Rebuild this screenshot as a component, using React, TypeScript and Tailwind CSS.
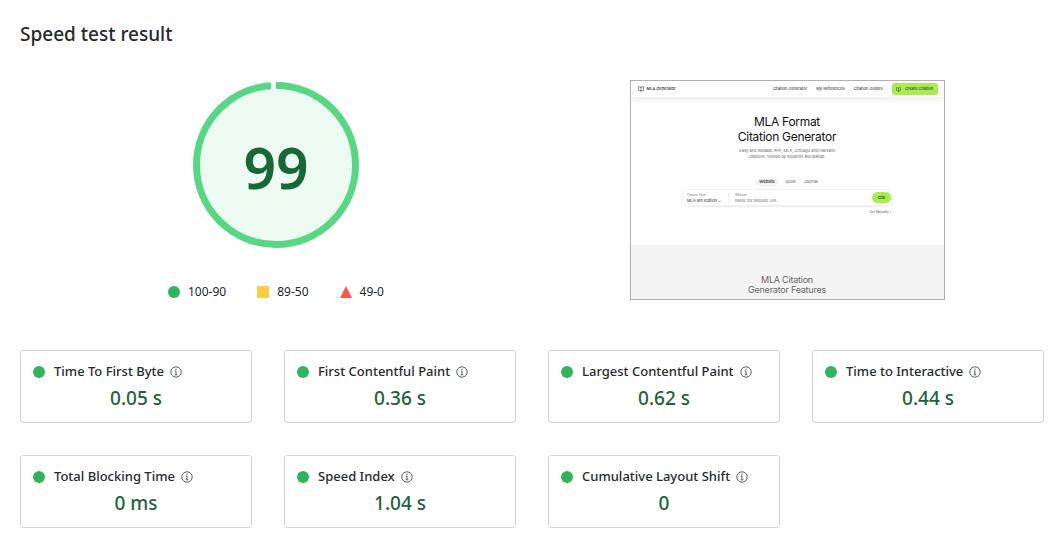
import { BookOpen } from "lucide-react";

const metrics = [
  { name: "Time To First Byte", value: "0.05 s" },
  { name: "First Contentful Paint", value: "0.36 s" },
  { name: "Largest Contentful Paint", value: "0.62 s" },
  { name: "Time to Interactive", value: "0.44 s" },
  { name: "Total Blocking Time", value: "0 ms" },
  { name: "Speed Index", value: "1.04 s" },
  { name: "Cumulative Layout Shift", value: "0" },
];

function InfoIcon() {
  return (
    <svg viewBox="0 0 12 12" className="size-3 shrink-0" fill="none" stroke="#33363a" aria-hidden="true">
      <circle cx="6" cy="6" r="5.2" strokeWidth="0.8" />
      <path d="M4.8 5H6v3.6M4.6 8.8h2.8" strokeWidth="0.8" />
      <circle cx="6" cy="3.2" r="0.6" fill="#33363a" stroke="none" />
    </svg>
  );
}

function Gauge({ score }: { score: number }) {
  return (
    <div className="grid place-items-center">
      <svg viewBox="0 0 166 166" className="col-start-1 row-start-1 size-[166px]" aria-hidden="true">
        <circle cx="83" cy="83" r="79.5" fill="#edfaf2" />
        <circle cx="83" cy="83" r="79.5" fill="none" stroke="#57d684" strokeWidth="7" />
        <path d="M78 0h5v7.2h-5z" fill="#fff" />
      </svg>
      <span className="col-start-1 row-start-1 pt-1 text-[57px] leading-none font-semibold text-[#19663a]">{score}</span>
    </div>
  );
}

function Legend() {
  return (
    <ul className="flex justify-center gap-[31px] text-xs leading-4 text-[#22262a]">
      <li className="flex items-center gap-2">
        <span className="size-3 rounded-full bg-[#2fb45d]" />
        100-90
      </li>
      <li className="flex items-center gap-2">
        <span className="size-3 bg-[#ffcb47]" />
        89-50
      </li>
      <li className="flex items-center gap-2">
        <svg viewBox="0 0 12 12" className="size-3" aria-hidden="true">
          <path d="M6 0l6 12H0z" fill="#ff574d" />
        </svg>
        49-0
      </li>
    </ul>
  );
}

function SitePreview() {
  return (
    <div className="flex h-[220px] w-[315px] flex-col overflow-hidden border border-[#b0b0b0] bg-white font-['Inter',sans-serif] text-[#222]">
      <div className="flex h-4 shrink-0 items-center pr-1.5 pl-[7px] text-[4px] leading-none shadow-[0_2px_10px_rgba(0,0,0,0.09)]">
        <BookOpen className="mr-[3px] size-[6px]" strokeWidth={2} />
        <span className="font-medium">MLA Generator</span>
        <nav className="ml-auto flex gap-[9px]">
          <a href="#generator">Citation Generator</a>
          <a href="#references">My References</a>
          <a href="#guides">Citation Guides</a>
        </nav>
        <button className="ml-[9px] flex h-3 w-[46px] items-center justify-center gap-1 rounded-[3px] bg-[#a9ec4f] whitespace-nowrap">
          <BookOpen className="size-[5px]" />
          Create Citation
        </button>
      </div>
      <div className="flex h-[148px] shrink-0 flex-col items-center pt-[17px]">
        <h2 className="text-center text-[12px] leading-[15px] tracking-tight text-[#111]">
          MLA Format
          <br />
          Citation Generator
        </h2>
        <p className="mt-1 text-center text-[4px] leading-[6px] text-[#666]">
          Easy and Reliable APA, MLA, Chicago and Harvard
          <br />
          citations, trusted by students worldwide.
        </p>
        <div className="mt-[18px] flex items-center gap-2 text-[4px] leading-none text-[#555]">
          <button className="h-2 rounded-full bg-[#f1f1f1] px-[3px] font-medium text-[#111]">Website</button>
          <button>Book</button>
          <button>Journal</button>
        </div>
        <div className="mt-[3px] flex h-[17px] w-[212px] items-center rounded-full border border-[#f0f0f0] pr-px pl-[5px] shadow-[0_1px_2px_rgba(0,0,0,0.08)]">
          <div className="w-[42px] border-r border-[#eee] text-[4px] leading-[5px]">
            <div className="text-[3px] text-[#777]">Citation Style</div>
            <div>MLA 9th edition ⌄</div>
          </div>
          <label className="flex flex-1 flex-col pl-1.5 text-[3px] leading-[5px] text-[#777]">
            Website
            <input type="url" placeholder="Paste the website URL" className="h-[5px] w-full text-[4px] leading-[5px] placeholder:text-[#777]" />
          </label>
          <button className="h-[11px] w-[19px] rounded-full bg-[#a9ec4f] text-[4px] leading-none font-medium">Cite</button>
        </div>
        <a href="#manual" className="mt-1 w-[209px] text-right text-[3px] leading-[5px] text-[#555]">
          Cite Manually &gt;
        </a>
      </div>
      <div className="flex-1 bg-[#f4f4f4] pt-[30px]">
        <h3 className="text-center text-[9px] leading-[10px] tracking-tight text-[#666]">
          MLA Citation
          <br />
          Generator Features
        </h3>
      </div>
    </div>
  );
}

export default function App() {
  return (
    <main className="bg-white px-5 pt-5 pb-6 font-['Noto_Sans','Open_Sans',sans-serif] text-[#26292d]">
      <h1 className="text-[19px] leading-7 font-medium">Speed test result</h1>
      <section className="mt-8 grid grid-cols-2">
        <div className="flex flex-col items-center justify-between pt-0.5">
          <Gauge score={99} />
          <Legend />
        </div>
        <div className="flex justify-center pr-0.5">
          <SitePreview />
        </div>
      </section>
      <section className="mt-[50px] grid grid-cols-4 gap-8">
        {metrics.map((metric) => (
          <article key={metric.name} className="h-[73px] rounded-[3px] border border-[#d4d4d4] px-3 pt-2.5">
            <h2 className="flex items-center text-[13px] leading-[21px] font-medium whitespace-nowrap">
              <span className="mr-[9px] size-3 shrink-0 rounded-full bg-[#2fb45d]" />
              {metric.name}
              <button className="ml-1.5" aria-label={"About " + metric.name}>
                <InfoIcon />
              </button>
            </h2>
            <p className="mt-0.5 text-center text-[19px] leading-7 font-medium text-[#1d6239]">{metric.value}</p>
          </article>
        ))}
      </section>
    </main>
  );
}
